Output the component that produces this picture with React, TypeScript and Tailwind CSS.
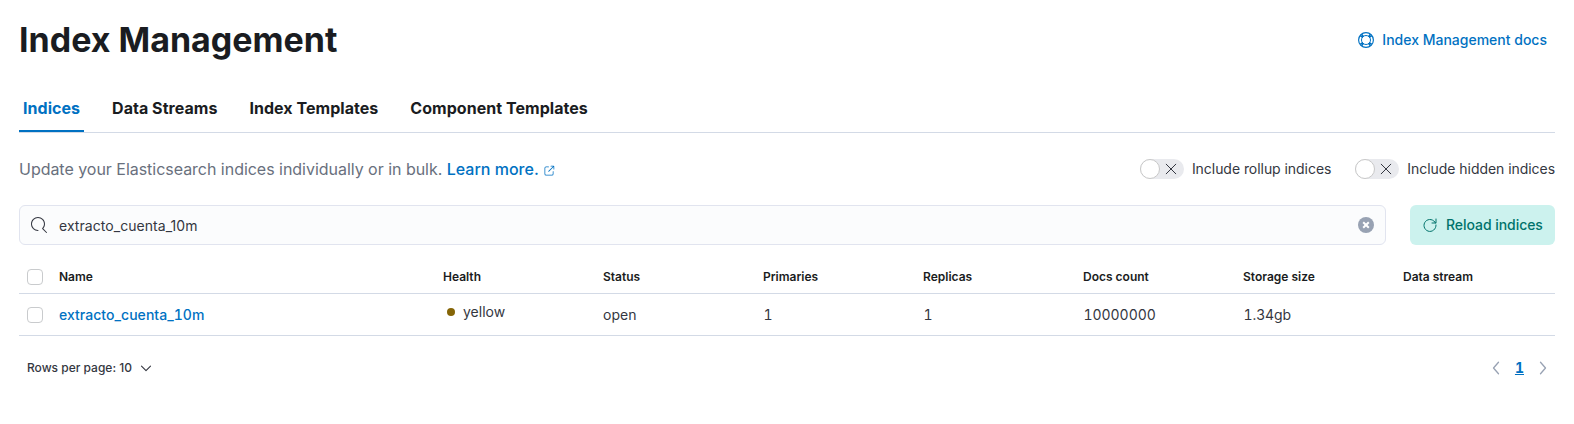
import type { ReactNode } from "react";

const P: Record<string, string> = {
  search:
    "M11.271 11.978l3.872 3.873a.502.502 0 00.708 0 .502.502 0 000-.708l-3.565-3.564c2.38-2.747 2.267-6.923-.342-9.532-2.73-2.73-7.17-2.73-9.898 0-2.728 2.729-2.728 7.17 0 9.9a6.955 6.955 0 004.949 2.05.5.5 0 000-1 5.96 5.96 0 01-4.242-1.757 6.01 6.01 0 010-8.486 6.004 6.004 0 018.484 0 6.01 6.01 0 010 8.486.5.5 0 00-.034.738z",
  popout:
    "M13 8.5a.5.5 0 1 1 1 0V12a2 2 0 0 1-2 2H4a2 2 0 0 1-2-2V4a2 2 0 0 1 2-2h3.5a.5.5 0 0 1 0 1H4a1 1 0 0 0-1 1v8a1 1 0 0 0 1 1h8a1 1 0 0 0 1-1V8.5Zm-5.12.339a.5.5 0 1 1-.706-.707L13.305 2H10.5a.5.5 0 1 1 0-1H14a1 1 0 0 1 1 1v3.5a.5.5 0 1 1-1 0V2.72L7.88 8.838Z",
};

function Stroke({ size, d, className, width = 1 }: { size: number; d: string; className?: string; width?: number }) {
  return (
    <svg width={size} height={size} viewBox="0 0 16 16" fill="none" stroke="currentColor" strokeWidth={width} strokeLinecap="round" strokeLinejoin="round" className={className}>
      <path d={d} />
    </svg>
  );
}

function HelpIcon() {
  return (
    <svg width="16" height="16" viewBox="0 0 16 16" fill="none" stroke="currentColor" strokeWidth="1">
      <circle cx="8" cy="8" r="7.4" strokeWidth="1.15" />
      <circle cx="8" cy="8" r="4.5" />
      <path
        strokeWidth="1.6"
        d="M2.4 3.8 4.8 5.4M3.8 2.4 5.4 4.8M13.6 3.8l-2.4 1.6M12.2 2.4l-1.6 2.4M2.4 12.2l2.4-1.6M3.8 13.6l1.6-2.4M13.6 12.2l-2.4-1.6M12.2 13.6l-1.6-2.4"
      />
    </svg>
  );
}

function Switch({ label }: { label: string }) {
  return (
    <label className="flex h-5 items-center">
      <span className="flex h-5 w-11 items-center rounded-full bg-[#e9eaee]">
        <span className="h-5 w-5 rounded-full border border-[#c8c8c8] bg-white" />
        <Stroke size={16} d="M3.2 3.2l9.6 9.6M12.8 3.2l-9.6 9.6" className="ml-[3px]" />
      </span>
      <span className="pl-2 leading-5 tracking-[-0.05px]">{label}</span>
    </label>
  );
}

function Checkbox() {
  return <span className="block h-4 w-4 rounded-[4px] border border-[#c9cbcd] bg-white" />;
}

const GRID = "grid grid-cols-[32px_384px_repeat(7,160px)] border-b border-[#d3dae6]";

function Cell({ children }: { children?: ReactNode }) {
  return <div className="flex items-center px-2">{children}</div>;
}

function NumberCell({ children }: { children: ReactNode }) {
  return <div className="flex items-center pr-2 pl-[8.5px]">{children}</div>;
}

const tabs = ["Indices", "Data Streams", "Index Templates", "Component Templates"];
const columns = ["Name", "Health", "Status", "Primaries", "Replicas", "Docs count", "Storage size", "Data stream"];

export default function App() {
  return (
    <div className="h-[424px] bg-white pr-[19px] pl-[19px] pt-5 font-['Inter',sans-serif] text-sm text-[#343741]">
      <header className="flex h-10 items-center justify-between">
        <h1 className="text-[34px] leading-10 font-bold text-[#1a1c21]">Index Management</h1>
        <a className="flex items-center gap-2 pr-2 font-medium text-[#0071c2]">
          <HelpIcon />
          Index Management docs
        </a>
      </header>

      <nav className="mt-6 flex h-[49px] gap-6 border-b border-[#d3dae6] text-base leading-6 font-bold tracking-[0.04px] text-[#1a1c21]">
        {tabs.map((t, i) => (
          <div key={t} className={i === 0 ? "border-b-2 border-[#0071c2] px-1 pt-3 text-[#0071c2]" : "px-1 pt-3"}>
            {t}
          </div>
        ))}
      </nav>

      <div className="mt-6 flex h-6 items-center justify-between">
        <p className="flex items-center text-base leading-6 text-[#69707d]">
          <span className="tracking-[-0.028px]">Update your Elasticsearch indices individually or in bulk.&nbsp;</span>
          <a className="flex items-center font-medium text-[#0071c2]">
            Learn more.
            <svg width="12" height="12" viewBox="0 0 16 16" fill="currentColor" className="mt-[3px] ml-1">
              <path d={P.popout} />
            </svg>
          </a>
        </p>
        <div className="flex gap-6">
          <Switch label="Include rollup indices" />
          <Switch label="Include hidden indices" />
        </div>
      </div>

      <div className="mt-6 flex h-10 gap-6">
        <div className="flex flex-1 items-center rounded-md border border-[#e1e4ef] bg-[#fbfcfd] px-[11px]">
          <svg width="16" height="16" viewBox="0 0 16 16" fill="currentColor">
            <path d={P.search} />
          </svg>
          <span className="ml-3 flex-1 pt-px tracking-[0.05px]">extracto_cuenta_10m</span>
          <svg width="16" height="16" viewBox="0 0 16 16">
            <circle cx="8" cy="8" r="8" fill="#98a2b3" />
            <path d="M5.2 5.2l5.6 5.6M10.8 5.2l-5.6 5.6" stroke="#fff" strokeWidth="2" />
          </svg>
        </div>
        <button className="flex w-[145px] items-center rounded-md bg-[#ccf2ee] pl-3 font-medium text-[#00726b]">
          <Stroke size={16} d="M13.5 6A6 6 0 1 0 14 8M14 2v4h-4" />
          <span className="ml-2 tracking-[-0.05px]">Reload indices</span>
        </button>
      </div>

      <div className="mt-4">
        <div className={`${GRID} h-[33px] text-xs font-semibold text-[#1a1c21]`}>
          <Cell><Checkbox /></Cell>
          {columns.map((c) => (
            <Cell key={c}>{c}</Cell>
          ))}
        </div>
        <div className={`${GRID} h-[42px] tabular-nums`}>
          <Cell><Checkbox /></Cell>
          <Cell><a className="font-medium tracking-[0.04px] text-[#0071c2]">extracto_cuenta_10m</a></Cell>
          <div className="flex items-center px-2 pb-[5px]">
            <span className="mr-2 ml-1 h-2 w-2 rounded-full bg-[#856507]" />
            yellow
          </div>
          <Cell>open</Cell>
          <NumberCell>1</NumberCell>
          <NumberCell>1</NumberCell>
          <NumberCell><span className="tracking-[-0.05px]">10000000</span></NumberCell>
          <NumberCell><span className="tracking-[-0.1px]">1.34gb</span></NumberCell>
          <Cell />
        </div>
      </div>

      <footer className="mt-5 flex h-6 items-center justify-between pr-1 pl-2">
        <div className="flex items-center text-xs font-medium">
          Rows per page: 10
          <Stroke size={12} d="M2 5.5l6 6 6-6" width={1.5} className="ml-2" />
        </div>
        <div className="flex items-center text-[#98a2b3]">
          <Stroke size={16} d="M10.5 2.3L5.5 8l5 5.7" width={1.3} />
          <span className="pr-[11px] pl-[11px] font-bold text-[#0071c2] underline tabular-nums">1</span>
          <Stroke size={16} d="M5.5 2.3l5 5.7-5 5.7" width={1.3} />
        </div>
      </footer>
    </div>
  );
}
